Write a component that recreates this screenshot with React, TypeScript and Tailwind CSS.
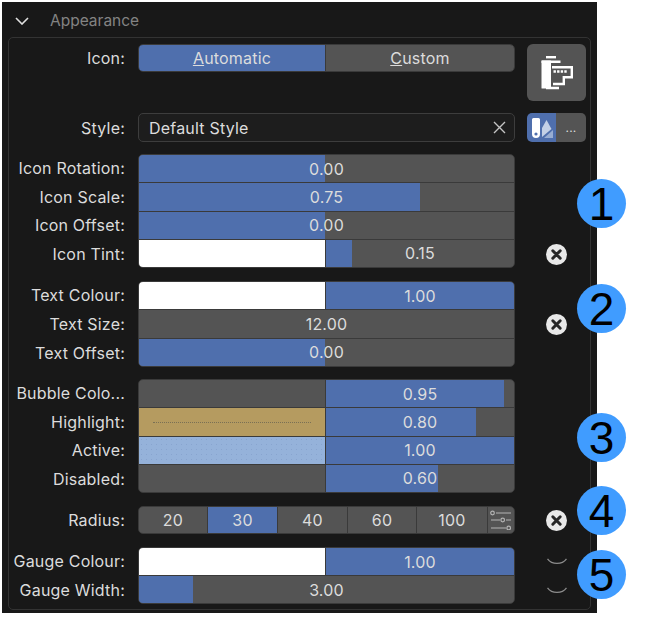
import type { ReactNode } from 'react';

const BLUE = 'bg-[#4f6fad]';

function ClearIcon() {
  return (
    <svg width="21" height="21" viewBox="0 0 21 21">
      <circle cx="10.5" cy="10.5" r="10.5" fill="#e8e8e8" />
      <path d="M6.8 6.8l7.4 7.4M14.2 6.8l-7.4 7.4" stroke="#262626" strokeWidth="3" strokeLinecap="round" />
    </svg>
  );
}

function ArcIcon() {
  return (
    <svg width="20" height="8" viewBox="0 0 20 8">
      <path d="M0.5 0.8C5 7 15 7 19.5 0.8" fill="none" stroke="#8c8c8c" strokeWidth="1.3" />
    </svg>
  );
}

function FilmIcon() {
  return (
    <svg width="32" height="34" viewBox="0 0 32 34" fill="none">
      <path d="M5 1.2h10" stroke="#fff" strokeWidth="2.4" />
      <rect x="0.5" y="4.5" width="9.5" height="28" rx="0.5" fill="#fff" />
      <path d="M0.5 5.7h19M5 32h13" stroke="#fff" strokeWidth="2.4" />
      <path d="M11 11.2h19.8v10h-8v6.8H12" stroke="#fff" strokeWidth="2.4" />
      <path d="M12.5 15.5h13.5" stroke="#fff" strokeWidth="2.4" strokeDasharray="2.4 1.2" />
    </svg>
  );
}

function SwatchIcon() {
  return (
    <svg width="22" height="22" viewBox="0 0 22 22">
      <path d="M11 11l4.5-8 5 9L11 20z" fill="#c3d0e6" />
      <path d="M22 13v8h-9z" fill="#98add2" />
      <path d="M1 2.5a1.5 1.5 0 0 1 1.5-1.5h5A1.5 1.5 0 0 1 9 2.5V17a4 4 0 0 1-8 0z" fill="#fff" />
      <circle cx="5" cy="17" r="1.6" fill="#4f6fad" />
    </svg>
  );
}

function FilterIcon() {
  return (
    <svg width="22" height="20" viewBox="0 0 22 20" fill="none" stroke="#b4b4b4" strokeWidth="1.2">
      <path d="M6 3h15M1 10h9M16 10h5M1 18h15" />
      <circle cx="2.5" cy="3" r="1.8" />
      <circle cx="12.7" cy="10" r="1.8" />
      <circle cx="18.7" cy="18" r="1.8" />
    </svg>
  );
}

type SliderProps = { value: string; fill: number };

function Slider({ value, fill }: SliderProps) {
  return (
    <div className="relative h-full flex-1 bg-[#545454]">
      <div className={`h-full ${BLUE}`} style={{ width: `${fill}%` }} />
      <span className="absolute inset-0 flex items-center justify-center">{value}</span>
    </div>
  );
}

function ColorSlider({ swatch, value, fill }: { swatch: ReactNode; value: string; fill: number }) {
  return (
    <div className="flex h-full">
      <div className="h-full w-[187px] border-r border-[#3a3a3a]">{swatch}</div>
      <Slider value={value} fill={fill} />
    </div>
  );
}

function Group({
  labels,
  rows,
  height,
  side,
}: {
  labels: string[];
  rows: ReactNode[];
  height: string;
  side?: ReactNode;
}) {
  return (
    <div className={`flex ${height}`}>
      <div className="flex w-[116px] flex-col text-right">
        {labels.map((label) => (
          <div key={label} className="flex flex-1 items-center justify-end">
            {label}
          </div>
        ))}
      </div>
      <div className="ml-[13px] flex w-[377px] flex-col gap-px overflow-hidden rounded-[5px] border border-[#3a3a3a] bg-[#3a3a3a]">
        {rows.map((row, i) => (
          <div key={i} className="min-h-0 flex-1">
            {row}
          </div>
        ))}
      </div>
      <div className="ml-3 w-[59px]">{side}</div>
    </div>
  );
}

const swatchWhite = <div className="h-full bg-white" />;
const swatchGrey = <div className="h-full bg-[#545454]" />;

export default function App() {
  return (
    <div className="relative h-[617px] w-[658px] overflow-hidden bg-white pt-[2px] pl-[2px] font-['Inter',sans-serif] text-[16px] tracking-[0.2px] text-[#dcdcdc]">
      <div className="flex h-[611px] w-[595px] flex-col bg-[#181818]">
        {/* Panel header */}
        <div className="flex h-[35px] items-center pt-[2px]">
          <svg className="ml-[13px]" width="14" height="8" viewBox="0 0 14 8" fill="none">
            <path d="M1 1l6 6 6-6" stroke="#e0e0e0" strokeWidth="1.6" />
          </svg>
          <span className="ml-[21px] text-[15.5px] tracking-normal text-[#838383]">Appearance</span>
        </div>

        <div className="mx-[6px] flex h-[573px] flex-col rounded-[5px] border border-[#333333] pt-[6px]">
          {/* Icon */}
          <div className="flex h-[57px]">
            <div className="flex h-[28px] w-[116px] items-center justify-end">Icon:</div>
            <div className="ml-[13px] flex h-[28px] w-[377px] overflow-hidden rounded-[5px] border border-[#3a3a3a]">
              <div className={`flex w-[187px] items-center justify-center border-r border-[#3a3a3a] ${BLUE}`}>
                <span><span className="underline">A</span>utomatic</span>
              </div>
              <div className="flex flex-1 items-center justify-center bg-[#545454]">
                <span><span className="underline">C</span>ustom</span>
              </div>
            </div>
            <div className="ml-3 flex h-[57px] w-[59px] items-center justify-center rounded-[6px] bg-[#545454]">
              <FilmIcon />
            </div>
          </div>

          {/* Style */}
          <div className="mt-3 flex h-[29px]">
            <div className="flex w-[116px] items-center justify-end">Style:</div>
            <div className="ml-[13px] flex w-[377px] items-center justify-between rounded-[5px] border border-[#3d3d3d] bg-[#1d1d1d] pr-[8px] pl-[10px]">
              <span>Default Style</span>
              <svg width="13" height="13" viewBox="0 0 13 13">
                <path d="M1 1l11 11M12 1L1 12" stroke="#c4c4c4" strokeWidth="1.4" />
              </svg>
            </div>
            <div className="ml-3 flex w-[59px] overflow-hidden rounded-[5px]">
              <div className={`flex w-[29px] items-center justify-center ${BLUE}`}>
                <SwatchIcon />
              </div>
              <div className="flex flex-1 items-center justify-center bg-[#545454] text-[12px]">...</div>
            </div>
          </div>

          <div className="mt-3">
            <Group
              height="h-[114px]"
              labels={['Icon Rotation:', 'Icon Scale:', 'Icon Offset:', 'Icon Tint:']}
              rows={[
                <Slider key="a" value="0.00" fill={49.6} />,
                <Slider key="b" value="0.75" fill={75} />,
                <Slider key="c" value="0.00" fill={49.6} />,
                <ColorSlider key="d" swatch={swatchWhite} value="0.15" fill={14} />,
              ]}
              side={
                <div className="flex h-full items-end justify-center pb-[3px]">
                  <ClearIcon />
                </div>
              }
            />
          </div>

          <div className="mt-[13px]">
            <Group
              height="h-[86px]"
              labels={['Text Colour:', 'Text Size:', 'Text Offset:']}
              rows={[
                <ColorSlider key="a" swatch={swatchWhite} value="1.00" fill={100} />,
                <Slider key="b" value="12.00" fill={0} />,
                <Slider key="c" value="0.00" fill={49.6} />,
              ]}
              side={
                <div className="flex h-full items-center justify-center">
                  <ClearIcon />
                </div>
              }
            />
          </div>

          <div className="mt-3">
            <Group
              height="h-[114px]"
              labels={['Bubble Colo...', 'Highlight:', 'Active:', 'Disabled:']}
              rows={[
                <ColorSlider key="a" swatch={swatchGrey} value="0.95" fill={94.7} />,
                <ColorSlider
                  key="b"
                  swatch={
                    <div className="flex h-full flex-col justify-end bg-[#b59b60] pb-[1px]">
                      <div className="mx-[14px] mb-[12px] border-t border-dotted border-[#7a7054]" />
                    </div>
                  }
                  value="0.80"
                  fill={80}
                />,
                <ColorSlider
                  key="c"
                  swatch={
                    <div className="h-full bg-[#95b2da] bg-[radial-gradient(#88a4cf_0.6px,transparent_0.8px)] bg-[length:5px_5px]" />
                  }
                  value="1.00"
                  fill={100}
                />,
                <ColorSlider key="d" swatch={swatchGrey} value="0.60" fill={59.6} />,
              ]}
            />
          </div>

          {/* Radius */}
          <div className="mt-[13px] flex h-[28px]">
            <div className="flex w-[116px] items-center justify-end">Radius:</div>
            <div className="ml-[13px] flex w-[377px] gap-px overflow-hidden rounded-[5px] border border-[#3a3a3a] bg-[#3a3a3a]">
              <div className="flex w-[68px] items-center justify-center bg-[#545454]">20</div>
              <div className={`flex w-[69px] items-center justify-center ${BLUE}`}>30</div>
              <div className="flex w-[69px] items-center justify-center bg-[#545454]">40</div>
              <div className="flex w-[68px] items-center justify-center bg-[#545454]">60</div>
              <div className="flex w-[70px] items-center justify-center bg-[#545454]">100</div>
              <div className="flex flex-1 items-center justify-center bg-[#545454]">
                <FilterIcon />
              </div>
            </div>
            <div className="ml-3 flex w-[59px] items-center justify-center">
              <ClearIcon />
            </div>
          </div>

          <div className="mt-[13px]">
            <Group
              height="h-[57px]"
              labels={['Gauge Colour:', 'Gauge Width:']}
              rows={[
                <ColorSlider key="a" swatch={swatchWhite} value="1.00" fill={100} />,
                <Slider key="b" value="3.00" fill={14.4} />,
              ]}
              side={
                <div className="flex h-full flex-col">
                  <div className="flex flex-1 items-center justify-center pt-[2px]">
                    <ArcIcon />
                  </div>
                  <div className="flex flex-1 items-center justify-center pt-[2px]">
                    <ArcIcon />
                  </div>
                </div>
              }
            />
          </div>
        </div>
      </div>

      {/* Numbered callouts */}
      {[
        { n: 1, top: 'top-[179px]' },
        { n: 2, top: 'top-[284px]' },
        { n: 3, top: 'top-[413px]' },
        { n: 4, top: 'top-[486px]' },
        { n: 5, top: 'top-[550px]' },
      ].map(({ n, top }) => (
        <div
          key={n}
          className={`absolute left-[577px] flex h-[49px] w-[49px] items-center justify-center rounded-full bg-[#409cff] font-['Liberation_Sans',sans-serif] text-[46px] leading-none tracking-normal text-black ${top}`}
        >
          {n}
        </div>
      ))}
    </div>
  );
}
